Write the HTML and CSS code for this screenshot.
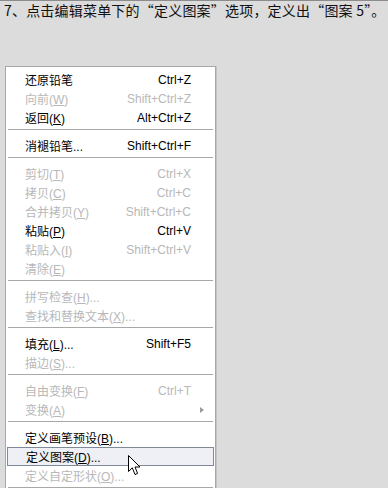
FILE: index.html
```html
<!DOCTYPE html>
<html lang="zh-CN">
<head>
  <meta charset="UTF-8" />
  <title>定义图案</title>
  <link rel="stylesheet" href="styles.css">
</head>
<body>
  <div class="caption">7、点击编辑菜单下的<span class="q">“</span>定义图案<span class="q">”</span>选项，定义出<span class="q">“</span>图案&nbsp;5<span class="q">”</span>。</div>
  <div class="menu">
    <div class="item"><span>还原铅笔</span><span class="key">Ctrl+Z</span></div>
    <div class="item off"><span>向前(<u>W</u>)</span><span class="key">Shift+Ctrl+Z</span></div>
    <div class="item"><span>返回(<u>K</u>)</span><span class="key">Alt+Ctrl+Z</span></div>
    <div class="sep"></div>
    <div class="item"><span>消褪铅笔...</span><span class="key">Shift+Ctrl+F</span></div>
    <div class="sep"></div>
    <div class="item off"><span>剪切(<u>T</u>)</span><span class="key">Ctrl+X</span></div>
    <div class="item off"><span>拷贝(<u>C</u>)</span><span class="key">Ctrl+C</span></div>
    <div class="item off"><span>合并拷贝(<u>Y</u>)</span><span class="key">Shift+Ctrl+C</span></div>
    <div class="item"><span>粘贴(<u>P</u>)</span><span class="key">Ctrl+V</span></div>
    <div class="item off"><span>粘贴入(<u>I</u>)</span><span class="key">Shift+Ctrl+V</span></div>
    <div class="item off"><span>清除(<u>E</u>)</span></div>
    <div class="sep"></div>
    <div class="item off"><span>拼写检查(<u>H</u>)...</span></div>
    <div class="item off"><span>查找和替换文本(<u>X</u>)...</span></div>
    <div class="sep"></div>
    <div class="item"><span>填充(<u>L</u>)...</span><span class="key">Shift+F5</span></div>
    <div class="item off"><span>描边(<u>S</u>)...</span></div>
    <div class="sep"></div>
    <div class="item off"><span>自由变换(<u>F</u>)</span><span class="key">Ctrl+T</span></div>
    <div class="item off"><span>变换(<u>A</u>)</span><span class="arrow"></span></div>
    <div class="sep"></div>
    <div class="item"><span>定义画笔预设(<u>B</u>)...</span></div>
    <div class="item active"><span>定义图案(<u>D</u>)...</span>
      <svg class="cursor" width="13" height="21" viewBox="0 0 13 21">
        <path d="M0.5 0.5 L0.5 16.5 L4.3 12.8 L7 19.5 L9.6 18.4 L7 12 L12 12 Z" fill="#fff" stroke="#000" stroke-width="1" stroke-linejoin="miter"/>
      </svg>
    </div>
    <div class="item off"><span>定义自定形状(<u>O</u>)...</span></div>
    <div class="sep"></div>
  </div>
</body>
</html>
```

FILE: styles.css
```css
html {
  overflow: hidden;
}
body {
  margin: 0;
  background: #dcdcdc;
  border-top: 1px solid #8c8c8c;
  font-family: "Liberation Sans", "Noto Sans CJK SC", sans-serif;
  color: #000;
}
.caption {
  height: 65px;
  box-sizing: border-box;
  padding: 1px 0 0 4px;
  font-family: "Noto Sans CJK SC", sans-serif;
  font-size: 14px;
  line-height: 16px;
  letter-spacing: 0.2px;
  color: #111;
  white-space: nowrap;
}
.q {
  font-feature-settings: "fwid";
}
.menu {
  margin-left: 5px;
  width: 209px;
  padding: 3px 0 20px;
  background: #fff;
  border: 1px solid #a8a8a8;
  box-shadow: 1px 0 0 #c4c4c4;
  font-size: 12px;
}
.item {
  position: relative;
  display: flex;
  justify-content: space-between;
  align-items: center;
  height: 19px;
  padding: 0 24px 0 19px;
  white-space: nowrap;
}
.item u {
  text-underline-offset: 1px;
}
.off {
  color: #b8b8b8;
}
.key {
  font-family: "Liberation Sans", sans-serif;
}
.active {
  margin: 0 1px;
  padding-left: 18px;
  height: 17px;
  background: #eef0f6;
  border: 1px solid #7e8a96;
}
.sep {
  height: 1px;
  margin: 2px 2px 6px;
  background: #a8a8a8;
}
.arrow {
  width: 0;
  height: 0;
  margin-right: -13px;
  border-top: 3px solid transparent;
  border-bottom: 3px solid transparent;
  border-left: 4px solid #9a9a9a;
}
.cursor {
  position: absolute;
  left: 120px;
  top: 7px;
}
```
